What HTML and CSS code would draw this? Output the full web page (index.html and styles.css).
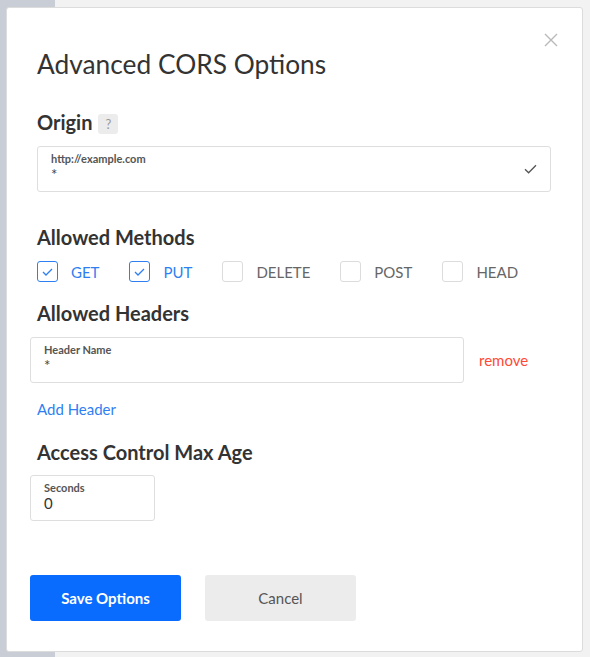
FILE: index.html
```html
<!DOCTYPE html>
<html lang="en">
<head>
<meta charset="utf-8">
<title>Advanced CORS Options</title>
<link rel="stylesheet" href="styles.css">
</head>
<body>
<div class="backdrop">
  <div class="modal">
    <button class="close" aria-label="Close">
      <svg width="14" height="14" viewBox="0 0 14 14"><path d="M1 1 L13 13 M13 1 L1 13" stroke="#b9b9b9" stroke-width="1.4" fill="none"/></svg>
    </button>
    <h1 class="title">Advanced CORS Options</h1>

    <div class="head-row origin-head">
      <h2 class="section-title">Origin</h2>
      <span class="help">?</span>
    </div>
    <div class="field field-origin">
      <div class="field-label">http://example.com</div>
      <div class="field-value">*</div>
      <svg class="field-check" width="13" height="10" viewBox="0 0 13 10"><path d="M1 5.2 L4.6 8.8 L12 1.2" stroke="#555" stroke-width="1.3" fill="none"/></svg>
    </div>

    <h2 class="section-title methods-title">Allowed Methods</h2>
    <div class="methods">
      <label class="method checked"><span class="box"><svg width="11" height="8" viewBox="0 0 11 8"><path d="M1 4 L4 7 L10 1" stroke="#2f7ff2" stroke-width="1.3" fill="none"/></svg></span><span class="method-name">GET</span></label>
      <label class="method checked"><span class="box"><svg width="11" height="8" viewBox="0 0 11 8"><path d="M1 4 L4 7 L10 1" stroke="#2f7ff2" stroke-width="1.3" fill="none"/></svg></span><span class="method-name">PUT</span></label>
      <label class="method"><span class="box"></span><span class="method-name">DELETE</span></label>
      <label class="method"><span class="box"></span><span class="method-name">POST</span></label>
      <label class="method"><span class="box"></span><span class="method-name">HEAD</span></label>
    </div>

    <h2 class="section-title headers-title">Allowed Headers</h2>
    <div class="header-row">
      <div class="field field-header">
        <div class="field-label">Header Name</div>
        <div class="field-value">*</div>
      </div>
      <a class="remove">remove</a>
    </div>
    <a class="add-header">Add Header</a>

    <h2 class="section-title age-title">Access Control Max Age</h2>
    <div class="field field-seconds">
      <div class="field-label">Seconds</div>
      <div class="field-value">0</div>
    </div>

    <div class="actions">
      <button class="btn btn-primary">Save Options</button>
      <button class="btn btn-secondary">Cancel</button>
    </div>
  </div>
</div>
</body>
</html>
```

FILE: styles.css
```css
html, body {
  margin: 0;
  padding: 0;
}
body {
  width: 590px;
  height: 657px;
  overflow: hidden;
  font-family: Lato, "Open Sans", "Liberation Sans", sans-serif;
  color: #333;
  background: linear-gradient(to right, #c9cdd6 0, #c9cdd6 55px, #f2f2f2 55px);
}
.backdrop {
  padding: 7px 0 0 6px;
}
.modal {
  position: relative;
  box-sizing: border-box;
  width: 577px;
  background: #fff;
  border: 1px solid #dcdcdc;
  border-radius: 3px;
  padding: 0 30px 30px 30px;
  display: flex;
  flex-direction: column;
  align-items: flex-start;
}
.close {
  position: absolute;
  top: 25px;
  right: 24px;
  width: 14px;
  height: 14px;
  padding: 0;
  border: 0;
  background: none;
  display: flex;
}
.title {
  margin: 40px 0 0 0;
  font-size: 26.3px;
  line-height: 32px;
  font-weight: 400;
  color: #333;
}
.head-row {
  display: flex;
  align-items: flex-end;
  gap: 6px;
}
.origin-head {
  margin-top: 30px;
}
.section-title {
  margin: 0;
  font-size: 20px;
  line-height: 24px;
  font-weight: 700;
  color: #333;
}
.help {
  width: 20px;
  height: 20px;
  border-radius: 3px;
  background: #ececec;
  color: #999;
  font-size: 13px;
  line-height: 20px;
  text-align: center;
}
.field {
  box-sizing: border-box;
  border: 1px solid #dedede;
  border-radius: 3px;
  padding: 5px 13px 8px 13px;
  background: #fff;
}
.field-label {
  font-size: 11px;
  line-height: 13px;
  font-weight: 700;
  color: #555;
}
.field-value {
  font-size: 15px;
  line-height: 18px;
  color: #444;
}
.field-origin {
  margin-top: 12px;
  width: 514px;
  display: grid;
  grid-template-columns: 1fr auto;
}
.field-origin .field-label,
.field-origin .field-value {
  grid-column: 1;
}
.field-check {
  grid-column: 2;
  grid-row: 1 / span 2;
  align-self: center;
  margin-top: 2px;
}
.methods-title {
  margin-top: 33px;
}
.methods {
  margin-top: 12px;
  display: flex;
  gap: 30px;
}
.method {
  display: flex;
  align-items: center;
  gap: 13px;
  height: 21px;
}
.box {
  box-sizing: border-box;
  width: 21px;
  height: 21px;
  border: 1px solid #dcdcdc;
  border-radius: 3px;
  display: flex;
  align-items: center;
  justify-content: center;
}
.method.checked .box {
  border-color: #2f7ff2;
}
.method-name {
  font-size: 15px;
  line-height: 18px;
  color: #666;
}
.method.checked .method-name {
  color: #2f7ff2;
}
.headers-title {
  margin-top: 19px;
}
.header-row {
  margin-top: 12px;
  margin-left: -7px;
  display: flex;
  align-items: center;
  gap: 15px;
}
.field-header {
  width: 434px;
}
.remove {
  font-size: 15px;
  line-height: 18px;
  color: #ff4a34;
}
.add-header {
  margin-top: 17px;
  font-size: 15px;
  line-height: 18px;
  color: #2f7ff2;
}
.age-title {
  margin-top: 22px;
}
.field-seconds {
  margin-top: 11px;
  margin-left: -7px;
  width: 125px;
}
.field-seconds .field-value {
  color: #333;
}
.actions {
  margin-top: 54px;
  margin-left: -7px;
  display: flex;
  gap: 24px;
}
.btn {
  width: 151px;
  height: 46px;
  border: 0;
  border-radius: 3px;
  font-family: Lato, "Open Sans", "Liberation Sans", sans-serif;
  font-size: 15px;
  font-weight: 700;
}
.btn-primary {
  background: #0a6cff;
  color: #fff;
}
.btn-secondary {
  background: #ececec;
  color: #555;
  font-weight: 400;
}
```
